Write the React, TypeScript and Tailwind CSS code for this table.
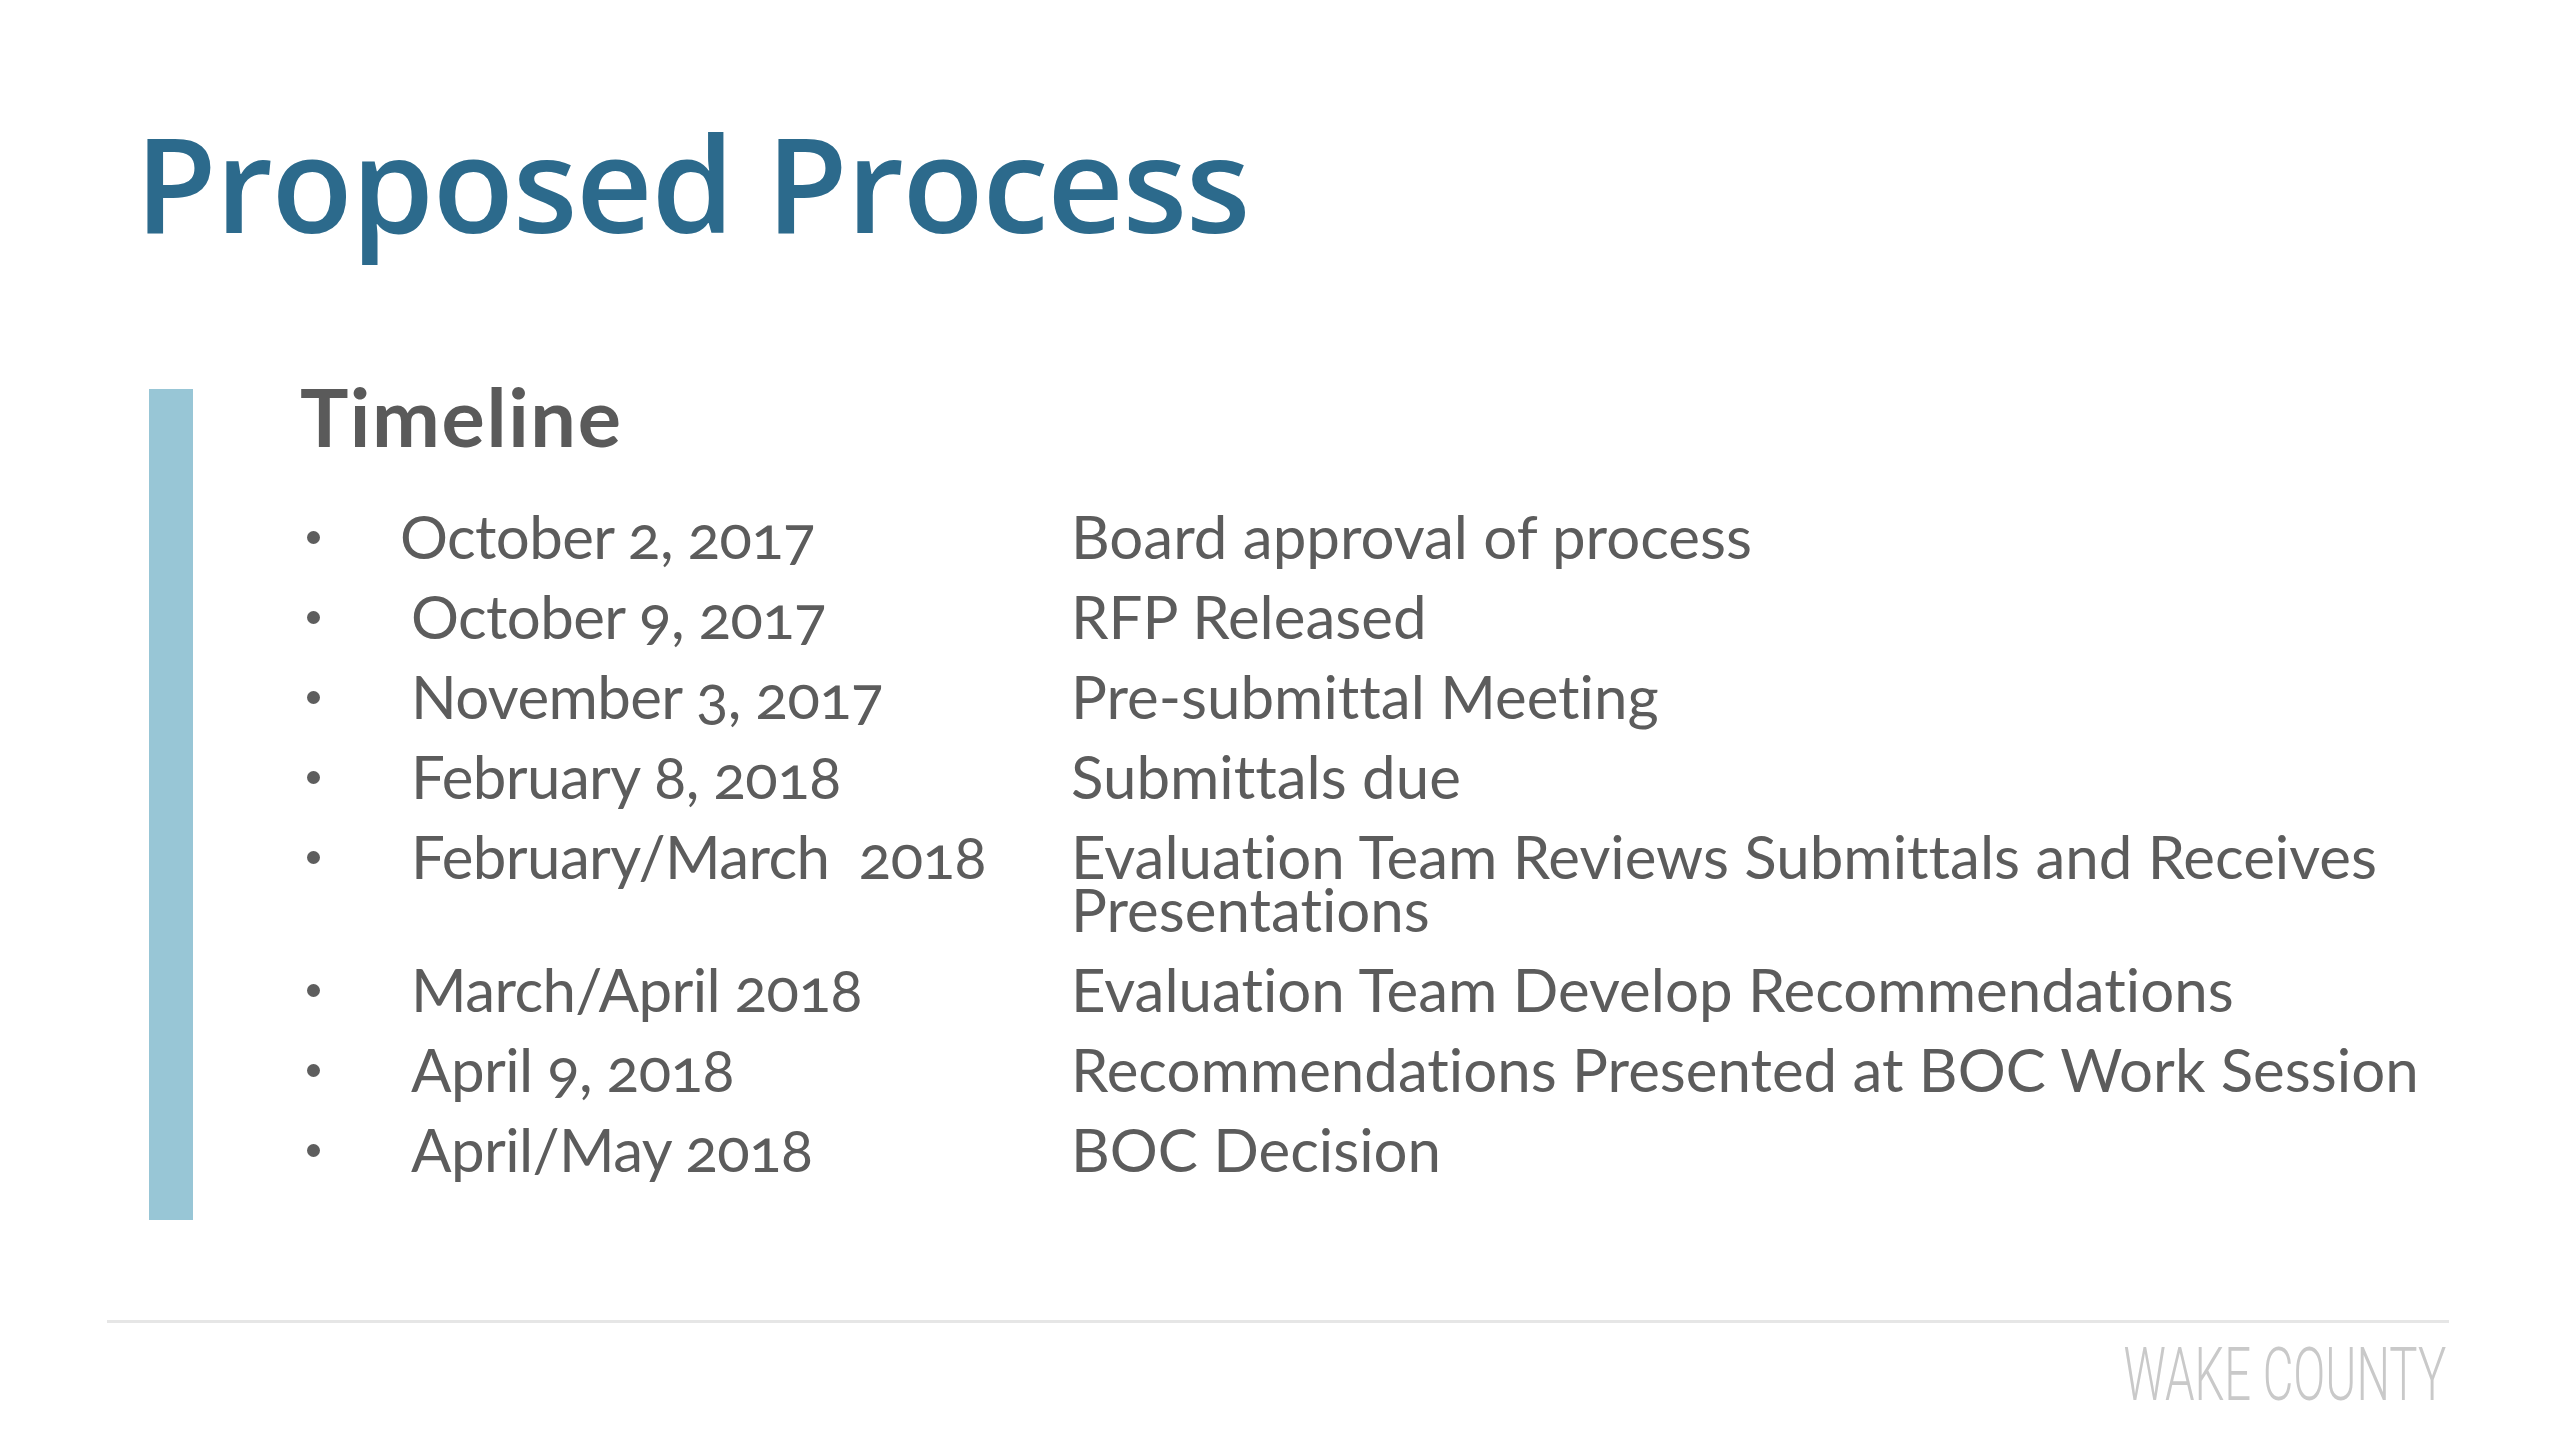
import React from "react"

const rows: { date: string; desc: string[]; first?: boolean }[] = [
  { date: "October 2, 2017", desc: ["Board approval of process"], first: true },
  { date: "October 9, 2017", desc: ["RFP Released"] },
  { date: "November 3, 2017", desc: ["Pre-submittal Meeting"] },
  { date: "February 8, 2018", desc: ["Submittals due"] },
  { date: "February/March  2018", desc: ["Evaluation Team Reviews Submittals and Receives", "Presentations"] },
  { date: "March/April 2018", desc: ["Evaluation Team Develop Recommendations"] },
  { date: "April 9, 2018", desc: ["Recommendations Presented at BOC Work Session"] },
  { date: "April/May 2018", desc: ["BOC Decision"] },
]

function TimelineRow({ date, desc, first }: { date: string; desc: string[]; first?: boolean }) {
  return (
    <>
      <div className="flex items-start">
        <div className="ml-[7px] mt-[21px] size-[13px] rounded-full bg-[#5e5e5e]" />
      </div>
      <div className={first ? "whitespace-pre tracking-[-0.01em]" : "whitespace-pre pl-[11px] tracking-[-0.01em]"}>{date}</div>
      <div className="flex flex-col whitespace-nowrap">
        {desc.map((line) => (
          <span key={line}>{line}</span>
        ))}
      </div>
    </>
  )
}

export default function App() {
  return (
    <div className="flex h-[1440px] w-[2560px] flex-col overflow-hidden bg-white">
      <h1 className="mt-[115px] pl-[135px] font-['Open_Sans',sans-serif] text-[133px] font-semibold leading-none tracking-[-0.01em] text-[#2c6a8c]">
        Proposed Process
      </h1>

      <div className="mt-[127px] flex">
        <div className="ml-[149px] mt-[14px] h-[831px] w-[44px] shrink-0 bg-[#98c6d6]" />
        <div className="ml-[107px] flex flex-col font-['Lato',sans-serif] text-[#5c5c5c] [font-variant-ligatures:none]">
          <h2 className="text-[81px] font-bold leading-none tracking-[0.02em] text-[#5a5a5a]">Timeline</h2>
          <div className="mt-[54px] grid grid-cols-[100px_671px_1fr] gap-y-[27px] text-[60px] leading-[53px] oldstyle-nums">
            {rows.map((r) => (
              <TimelineRow key={r.date} date={r.date} desc={r.desc} first={r.first} />
            ))}
          </div>
        </div>
      </div>

      <div className="ml-[107px] mt-[100px] h-[3px] w-[2342px] bg-[#e6e6e6]" />
      <div className="mr-[114px] mt-[14px] origin-right scale-x-[0.63] self-end font-['Roboto',sans-serif] text-[75px] font-light leading-none text-[#c9c9c9]">
        WAKE COUNTY
      </div>
    </div>
  )
}
